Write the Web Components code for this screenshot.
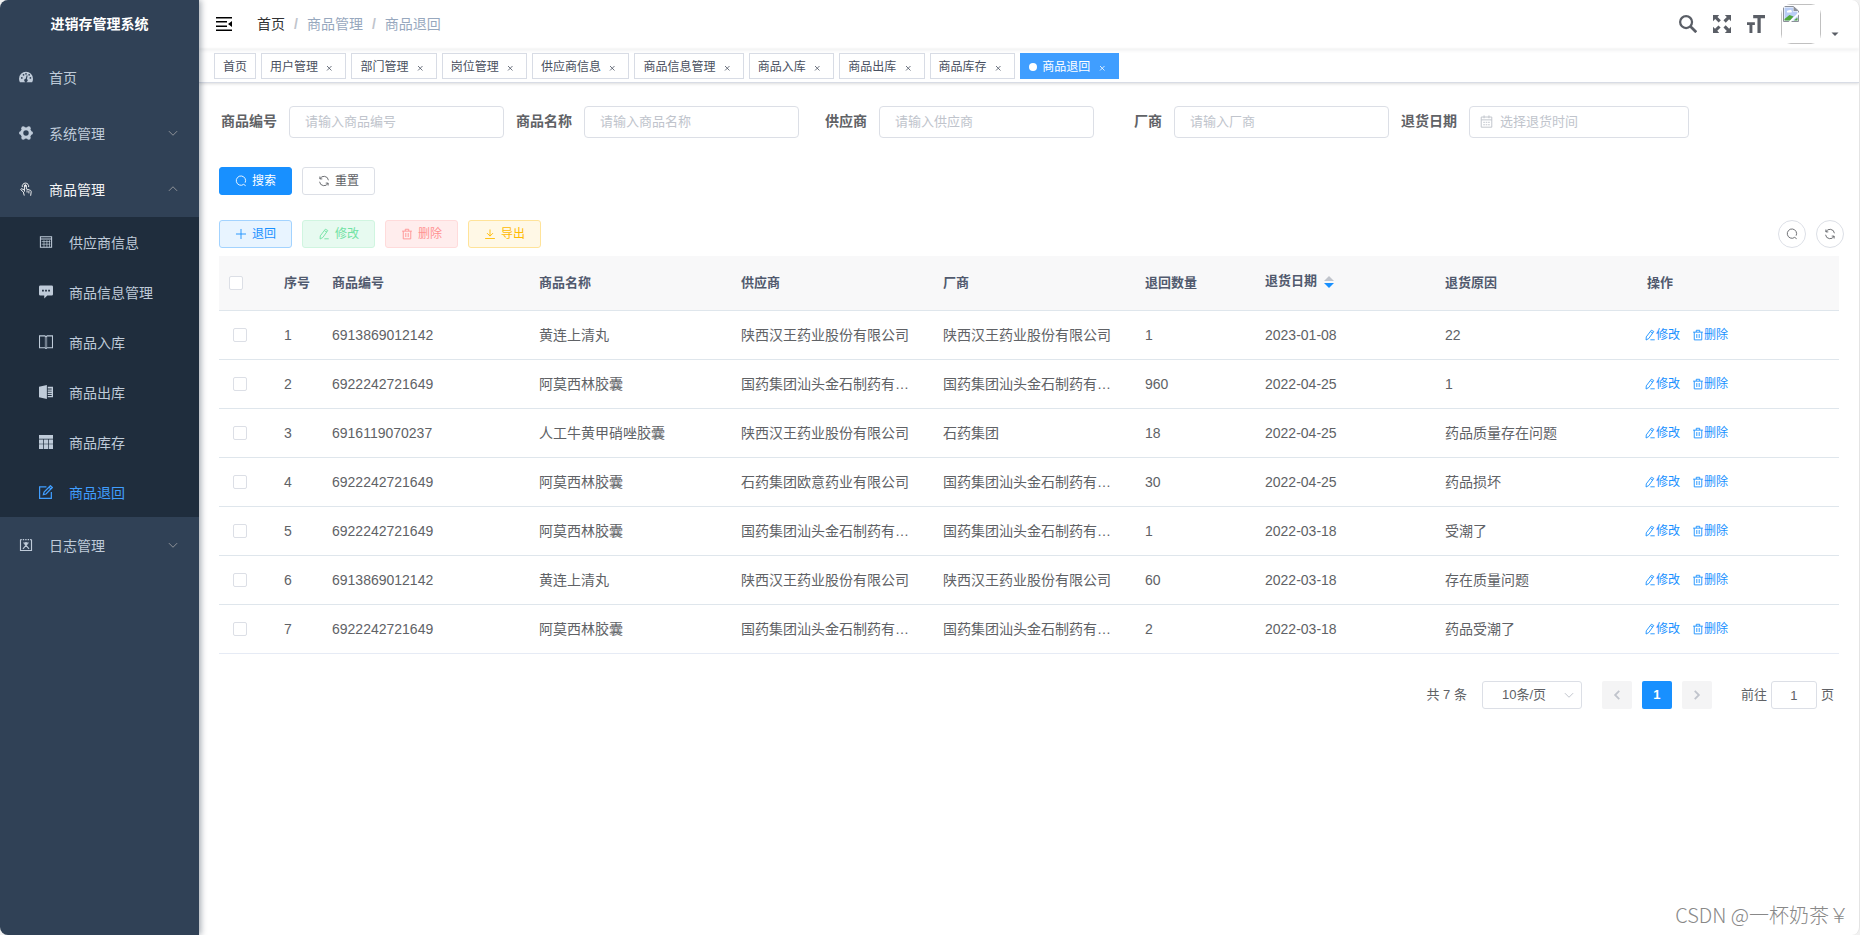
<!DOCTYPE html>
<html lang="zh-CN">
<head>
<meta charset="utf-8">
<meta name="viewport" content="width=device-width, initial-scale=1">
<title>进销存管理系统</title>
<style>
  body {
    margin: 0;
    background: #f1f1f1;
    font: 14px/20px "Liberation Sans", "Noto Sans CJK SC", sans-serif;
    color: #606266;
  }
</style>
</head>
<body>
<app-shell></app-shell>

<script>
const ICONS = {
  dashboard: '<path fill="currentColor" fill-rule="evenodd" d="M8 2a8 8 0 0 0-8 8c0 1.500.4 2.800 1 4h14a8 8 0 0 0 1-4 8 8 0 0 0-8-8zM2.200 9a1 1 0 1 1 2 0 1 1 0 0 1-2 0zm2-3.500a1 1 0 1 1 2 0 1 1 0 0 1-2 0zM8 3.300a1 1 0 1 1 0 2 1 1 0 0 1 0-2zm1.800 2.900-.7 4.100a1.900 1.900 0 1 1-1.500-.4l1.200-4zm.8-.7a1 1 0 1 1 2 0 1 1 0 0 1-2 0zm1.400 3.500a1 1 0 1 1 2 0 1 1 0 0 1-2 0z"/>',
  gear: '<circle cx="8" cy="8" r="4.800" fill="none" stroke="currentColor" stroke-width="3.400"/><g fill="currentColor"><circle cx="14" cy="8" r="2"/><circle cx="2" cy="8" r="2"/><circle cx="11.200" cy="2.500" r="2.200"/><circle cx="4.800" cy="2.500" r="2.200"/><circle cx="11.200" cy="13.500" r="2.200"/><circle cx="4.800" cy="13.500" r="2.200"/></g>',
  touch: '<g fill="none" stroke="currentColor" stroke-width="1.100"><path d="M3.800 5.800a3.700 3.700 0 1 1 7.200 0"/><path d="M6.200 11V4.200c0-1.500 2.200-1.500 2.200 0V8l4.600 1.500c1 .4 1 1 .9 2l-.6 4.200M6 9 3 7.700c-1-.2-1.500 1-.6 1.500L5 11.500l1 4M9.200 9.500V12M11.300 10.300V13"/></g><circle cx="7.300" cy="4.200" r="1.200" fill="currentColor"/>',
  table: '<path fill="none" stroke="currentColor" stroke-width="1.200" d="M1.600 2.100h12.800v11.800H1.600zM1.600 4.500h12.800"/><path fill="none" stroke="currentColor" d="M3 7.500h10M3 10.500h10M5.700 6v8M9 6v8M12 6v8" opacity=".8"/>',
  message: '<path fill="currentColor" fill-rule="evenodd" d="M1.500.5h13A1.500 1.500 0 0 1 16 2v8.500a1.500 1.500 0 0 1-1.500 1.500H9.500L6 15.500V12H1.500A1.500 1.500 0 0 1 0 10.500V2A1.500 1.500 0 0 1 1.500.5zM3.500 5.500v2h2v-2zm3.500 0v2h2v-2zm3.500 0v2h2v-2z"/>',
  book: '<path fill="none" stroke="currentColor" stroke-width="1.200" d="M6.600 1H.6v13.500h6l1.400 1 1.400-1h6V1h-6L8 2z"/><path fill="currentColor" opacity=".5" d="M6.600 1.500 8 2.300l1.400-.8v13L8 15.300l-1.400-.8z"/>',
  excel: '<path fill="currentColor" d="M0 2 9 0v16l-9-2zM10 2h6v12h-6v-1.500h4.500v-1H10V10h4.500V9H10V7.500h4.500v-1H10V5h4.500V4H10z"/>',
  grid: '<path fill="currentColor" d="M0 0h16v4.300H0zM0 5h4.800v5H0zM5.600 5h4.800v5H5.600zM11.200 5H16v5h-4.800zM0 10.700h4.800V16H0zM5.600 10.700h4.800V16H5.600zM11.200 10.700H16V16h-4.800z"/>',
  compose: '<g fill="none" stroke="currentColor" stroke-width="1.400"><path d="M8.500 2.200H.7v13h13.400V8"/><path d="m5 11 .8-3L13 .8l2.200 2.100L8 10.300zM11.500 2.500l2 2"/></g>',
  log: '<g fill="none" stroke="currentColor" stroke-width="1.300"><path d="M1.700 2v12.300h12.600V2"/><path stroke-dasharray="1.600 1.200" d="M1.500 1.800h13"/><path d="M4.500 12.500 8 8.500l3.500 4M5 5.500l3 1 3-1"/></g><circle cx="8" cy="6.500" r="2" fill="currentColor"/>',
  down: '<path fill="none" stroke="currentColor" stroke-width="1.300" d="m2.500 5.500 5.500 5.500 5.500-5.500"/>',
  up: '<path fill="none" stroke="currentColor" stroke-width="1.300" d="M2.500 10.500 8 5l5.500 5.500"/>',
  left: '<path fill="none" stroke="currentColor" stroke-width="2.400" d="M11 2.500 5.500 8l5.500 5.500"/>',
  right: '<path fill="none" stroke="currentColor" stroke-width="2.400" d="M5 2.500 10.500 8 5 13.500"/>',
  fold: '<path fill="currentColor" d="M0 1h16v1.500H0zM0 5h11v1.500H0zM0 9.500h11V11H0zM0 13.500h16V15H0zM16 5v6l-4-3z"/>',
  magnifier: '<g fill="none" stroke="currentColor" stroke-width="2"><circle cx="6.300" cy="6.300" r="5.300"/><path stroke-width="2.400" d="m10 10 5.300 5.300"/></g>',
  expand: '<path fill="currentColor" d="M0 0h5.500L4 1.700l3 3L5 6.600l-3-3L0 5.500zM16 0v5.500L14.300 3.800l-3 3L9.300 4.700l3-3L10.500 0zM0 16v-5.500l1.800 1.800 3-3L6.800 11l-3 3 1.700 2zM16 16h-5.500l1.800-1.800-3-3 2-2 3 3 1.700-1.700z"/>',
  fontsize: '<path fill="currentColor" d="M5.500 0H16v2.800h-3.800V16H9.300V2.800H5.500zM0 6.500h7v2.300H4.800V16H2.200V8.800H0z"/>',
  search: '<path fill="none" stroke="currentColor" stroke-width="1.200" d="M11.300 12.700A6.200 6.200 0 1 1 13.500 10.200M11.300 12.300l2.900 2"/>',
  refresh: '<path fill="none" stroke="currentColor" stroke-width="1.200" d="M2.500 2v3.200h3.200M2.500 5.200A6 6 0 0 1 13.900 7M13.500 14v-3.200h-3.200M13.500 10.800A6 6 0 0 1 2.100 9"/>',
  plus: '<path fill="none" stroke="currentColor" stroke-width="1.200" d="M8 1.300v13.400M1.300 8h13.400"/>',
  edit: '<path fill="none" stroke="currentColor" stroke-width="1.200" d="M9.800 1.600 13 3.300 6.500 12.600l-3.700 2.100.2-4.200zM8.700 3.700l3.200 1.800M8.500 14.400h5.800"/>',
  trash: '<path fill="none" stroke="currentColor" stroke-width="1.200" d="M1.500 4.200h13M5.700 4V1.700h4.600V4M3 4.200v10.300h10V4.200M6.400 6.700v5.300M9.600 6.700v5.300"/>',
  download: '<path fill="none" stroke="currentColor" stroke-width="1.200" d="M8 2v8.800M4 6.800l4 4 4-4M1.500 14h13"/>',
  calendar: '<path fill="none" stroke="currentColor" stroke-width="1.200" d="M1.500 2.500h13v12.500h-13zM1.500 6h13M5 .5v3.500M11 .5v3.500M4 9h2M7 9h2M10 9h2M4 12h2M7 12h2M10 12h2"/>',
  close: '<path fill="none" stroke="currentColor" stroke-width=".8" d="m6 6 4.500 4.500M10.500 6 6 10.500"/>',
  caret: '<path fill="currentColor" d="M1 5h14l-7 7z"/>',
  broken: '<path fill="#fff" stroke="#8b9099" d="M.5.500h10l5 4.500v10.500H.5z"/><path fill="#b9cdf5" d="M1.500 1.500h8.500v4h4.500v9h-13z"/><path fill="#fff" d="M4 6.500a1.500 1.500 0 0 1 2-2 1.500 1.500 0 0 1 2.500 2z"/><path fill="#4fa83a" d="M1.500 14.500v-1.500L6.500 9l4 1.500-3.500 4z"/><path fill="#4fa83a" d="m11 14.500 3.500-3v3z"/><path fill="#fff" d="M16 6v2.500L8 16H5.500z"/><path fill="#8b9099" d="M10.500.5 15.500 5h-5z"/>'
};

class Base extends HTMLElement {
  constructor() { super(); this.attachShadow({ mode: 'open' }); }
  connectedCallback() { this.shadowRoot.innerHTML = this.render(); }
}

customElements.define('ui-icon', class extends Base {
  render() {
    return `<style>:host{display:inline-block;width:12px;height:12px;flex:none}svg{display:block;width:100%;height:100%}</style>
    <svg viewBox="0 0 16 16" aria-hidden="true">${ICONS[this.getAttribute('name')]}</svg>`;
  }
});

customElements.define('ui-button', class extends Base {
  render() {
    const dis = this.hasAttribute('disabled') ? 'disabled' : '';
    return `<style>
      :host{display:inline-block;--bg:#fff;--fg:#606266;--bd:#dcdfe6}
      :host([kind=primary]){--bg:#1890ff;--fg:#fff;--bd:#1890ff}
      :host([kind=add]){--bg:#e8f4ff;--fg:#1890ff;--bd:#a3d3ff}
      :host([kind=edit]){--bg:#e7faf0;--fg:#71e2a3;--bd:#d0f5e0}
      :host([kind=remove]){--bg:#ffeded;--fg:#ff9292;--bd:#ffdbdb}
      :host([kind=export]){--bg:#fff8e6;--fg:#ffba00;--bd:#ffe399}
      button{display:flex;align-items:center;gap:5px;height:28px;box-sizing:border-box;padding:0 15px;
        border:1px solid var(--bd);border-radius:3px;background:var(--bg);color:var(--fg);
        font:inherit;font-size:12px;line-height:16px;white-space:nowrap;cursor:pointer}
      :host([round]) button{width:28px;padding:0;justify-content:center;border-radius:50%}
    </style>
    <button type="button" ${dis} aria-label="${this.getAttribute('label') || this.textContent}"><ui-icon name="${this.getAttribute('icon')}"></ui-icon><slot></slot></button>`;
  }
});

customElements.define('side-item', class extends Base {
  render() {
    const arrow = this.getAttribute('arrow');
    return `<style>
      :host{display:block;color:#bfcbd9}
      :host([open]){color:#f4f4f5}
      :host([active]){color:#409eff}
      a{display:flex;align-items:center;gap:16px;height:56px;padding:0 20px 0 19px;color:inherit;text-decoration:none}
      :host([sub]) a{height:50px;padding-left:39px}
      ui-icon{width:14px;height:14px}
      .t{flex:1;padding-top:2px}
      .arrow{width:12px;height:12px;color:#909399}
    </style>
    <a href="#"><ui-icon name="${this.getAttribute('icon')}"></ui-icon><span class="t"><slot></slot></span>${arrow ? `<ui-icon class="arrow" name="${arrow}"></ui-icon>` : ''}</a>`;
  }
});

customElements.define('side-bar', class extends Base {
  render() {
    return `<style>
      :host{display:block;background:#304156;box-shadow:2px 0 6px rgba(0,21,41,.35);position:relative;z-index:2}
      h1{margin:0;height:49px;line-height:49px;text-align:center;font-size:14px;font-weight:700;color:#fff}
      .sub{background:#1f2d3d}
    </style>
    <h1>进销存管理系统</h1>
    <nav>
      <side-item icon="dashboard">首页</side-item>
      <side-item icon="gear" arrow="down">系统管理</side-item>
      <side-item icon="touch" arrow="up" open>商品管理</side-item>
      <div class="sub">
        <side-item sub icon="table">供应商信息</side-item>
        <side-item sub icon="message">商品信息管理</side-item>
        <side-item sub icon="book">商品入库</side-item>
        <side-item sub icon="excel">商品出库</side-item>
        <side-item sub icon="grid">商品库存</side-item>
        <side-item sub icon="compose" active>商品退回</side-item>
      </div>
      <side-item icon="log" arrow="down">日志管理</side-item>
    </nav>`;
  }
});

customElements.define('nav-bar', class extends Base {
  render() {
    return `<style>
      :host{display:flex;align-items:center;box-sizing:border-box;height:49px;padding:0 20px 2px 17px;box-shadow:0 1px 4px rgba(0,21,41,.08)}
      button{display:block;padding:0;border:0;background:none;color:#5a5e66;line-height:0}
      button ui-icon{width:18px;height:18px}
      .fold{color:#000}.fold ui-icon{width:16px;height:16px}
      .crumb{display:flex;gap:9px;margin-left:25px;color:#97a8be;flex:1}
      .crumb a{color:#303133;text-decoration:none}
      .crumb i{font-style:normal;font-weight:700;color:#c0c4cc}
      .tools{display:flex;align-items:center;gap:16px}
      .user{display:flex;align-items:flex-end;gap:10px}
      .user .caret{width:8px;height:8px;margin-bottom:6px}
      .avatar{width:40px;height:40px;border-radius:10px;overflow:hidden}
      .avatar div{box-sizing:border-box;height:100%;border:1px solid #c0c0c0;padding:1px}
      .avatar ui-icon{width:16px;height:16px;display:block}
    </style>
    <button class="fold" type="button" aria-label="折叠菜单"><ui-icon name="fold"></ui-icon></button>
    <div class="crumb"><a href="#">首页</a><i>/</i><span>商品管理</span><i>/</i><span>商品退回</span></div>
    <div class="tools">
      <button type="button" aria-label="搜索"><ui-icon name="magnifier"></ui-icon></button>
      <button type="button" aria-label="全屏"><ui-icon name="expand"></ui-icon></button>
      <button type="button" aria-label="字号"><ui-icon name="fontsize"></ui-icon></button>
      <button class="user" type="button" aria-label="用户"><span class="avatar"><div><ui-icon name="broken"></ui-icon></div></span><ui-icon class="caret" name="caret"></ui-icon></button>
    </div>`;
  }
});

customElements.define('tag-item', class extends Base {
  render() {
    const active = this.hasAttribute('active');
    return `<style>
      :host{display:block;box-sizing:border-box;height:26px;padding:0 8px;border:1px solid #d8dce5;background:#fff;color:#495060;font-size:12px;line-height:26px;white-space:nowrap}
      :host([active]){background:#409eff;border-color:#409eff;color:#fff}
      a{color:inherit;text-decoration:none}
      .dot{display:inline-block;width:8px;height:8px;border-radius:50%;background:#fff;margin-right:2px}
      button{display:inline-block;width:16px;height:16px;padding:0;border:0;background:none;color:inherit;line-height:0;vertical-align:middle}
      ui-icon{width:16px;height:16px}
    </style>${active ? '<span class="dot"></span> ' : ''}<a href="#"><slot></slot></a>${this.hasAttribute('fixed') ? '' : ' <button type="button" aria-label="关闭"><ui-icon name="close"></ui-icon></button>'}`;
  }
});

customElements.define('tags-view', class extends Base {
  render() {
    const names = ['用户管理', '部门管理', '岗位管理', '供应商信息', '商品信息管理', '商品入库', '商品出库', '商品库存'];
    return `<style>
      :host{display:flex;gap:5px;box-sizing:border-box;height:34px;padding:4px 15px 0;border-bottom:1px solid #d8dce5;
        box-shadow:0 1px 3px rgba(0,0,0,.12),0 0 3px rgba(0,0,0,.04)}
    </style>
    <tag-item fixed>首页</tag-item>${names.map(n => `<tag-item>${n}</tag-item>`).join('')}<tag-item active>商品退回</tag-item>`;
  }
});

customElements.define('form-field', class extends Base {
  render() {
    const date = this.hasAttribute('date');
    return `<style>
      :host{display:flex;align-items:center}
      label{width:58px;padding:0 12px 2px 0;text-align:right;font-weight:700;line-height:30px}
      .box{position:relative;width:215px}
      :host([date]) .box{width:220px}
      input{display:block;box-sizing:border-box;width:100%;height:32px;padding:0 15px 2px;border:1px solid #dcdfe6;border-radius:4px;
        background:#fff;color:#606266;font:inherit;font-size:13px;outline:0}
      input::placeholder{color:#c0c4cc;opacity:1}
      :host([date]) input{padding-left:30px}
      ui-icon{position:absolute;left:11px;top:9px;width:13px;height:13px;color:#c0c4cc}
    </style>
    <label for="f">${this.getAttribute('label')}</label>
    <span class="box">${date ? '<ui-icon name="calendar"></ui-icon>' : ''}<input id="f" type="text" placeholder="${this.getAttribute('hint')}"></span>`;
  }
});

customElements.define('search-form', class extends Base {
  render() {
    return `<style>
      :host{display:block}
      .fields{display:flex;flex-wrap:wrap;gap:18px 10px}
      .actions{display:flex;gap:10px;margin-top:29px}
    </style>
    <div class="fields">
      <form-field label="商品编号" hint="请输入商品编号"></form-field>
      <form-field label="商品名称" hint="请输入商品名称"></form-field>
      <form-field label="供应商" hint="请输入供应商"></form-field>
      <form-field label="厂商" hint="请输入厂商"></form-field>
      <form-field date label="退货日期" hint="选择退货时间"></form-field>
    </div>
    <div class="actions">
      <ui-button kind="primary" icon="search">搜索</ui-button>
      <ui-button icon="refresh">重置</ui-button>
    </div>`;
  }
});

customElements.define('tool-bar', class extends Base {
  render() {
    return `<style>
      :host{display:flex;gap:10px}
      .space{flex:1}
    </style>
    <ui-button kind="add" icon="plus">退回</ui-button>
    <ui-button kind="edit" icon="edit" disabled>修改</ui-button>
    <ui-button kind="remove" icon="trash" disabled>删除</ui-button>
    <ui-button kind="export" icon="download">导出</ui-button>
    <span class="space"></span>
    <ui-button round icon="search" label="显示搜索"></ui-button>
    <ui-button round icon="refresh" label="刷新"></ui-button>`;
  }
});

const HW = '陕西汉王药业股份有限公司', JS = '国药集团汕头金石制药有限公司';
const ROWS = [
  ['6913869012142', '黄连上清丸', HW, HW, 1, '2023-01-08', '22'],
  ['6922242721649', '阿莫西林胶囊', JS, JS, 960, '2022-04-25', '1'],
  ['6916119070237', '人工牛黄甲硝唑胶囊', HW, '石药集团', 18, '2022-04-25', '药品质量存在问题'],
  ['6922242721649', '阿莫西林胶囊', '石药集团欧意药业有限公司', JS, 30, '2022-04-25', '药品损坏'],
  ['6922242721649', '阿莫西林胶囊', JS, JS, 1, '2022-03-18', '受潮了'],
  ['6913869012142', '黄连上清丸', HW, HW, 60, '2022-03-18', '存在质量问题'],
  ['6922242721649', '阿莫西林胶囊', JS, JS, 2, '2022-03-18', '药品受潮了']
];

customElements.define('data-table', class extends Base {
  render() {
    const row = (r, i) => `<tr><td class="pick"><input type="checkbox" aria-label="选择第${i + 1}行"></td><td>${i + 1}</td>${r.map(c => `<td>${c}</td>`).join('')}
      <td class="ops"><div><a href="#"><ui-icon name="edit"></ui-icon>修改</a><a href="#"><ui-icon name="trash"></ui-icon>删除</a></div></td></tr>`;
    return `<style>
      :host{display:block}
      table{width:100%;table-layout:fixed;border-collapse:separate;border-spacing:0}
      th,td{box-sizing:border-box;padding:0 12px 0 10px;text-align:left;border-bottom:1px solid #dfe6ec;white-space:nowrap;overflow:hidden;text-overflow:ellipsis}
      th{height:55px;background:#f8f8f9;color:#515a6e;font-size:13px;font-weight:700}
      td{height:49px}
      tr:last-child td{border-bottom-color:#e6ebf5}
      .pick{padding:0 0 0 14px}
      th.pick{padding-left:10px}
      th.seq{padding-right:0}
      input{appearance:none;display:block;box-sizing:border-box;width:14px;height:14px;margin:0;border:1px solid #dcdfe6;border-radius:2px;background:#fff}
      .sort{display:flex;align-items:center;gap:7px;padding-bottom:4px}
      .sort svg{width:10px;height:12px;margin-top:2px}
      .ops{padding:0 0 0 7px}
      .ops div{display:flex;gap:12px}
      a{display:flex;align-items:center;color:#1890ff;font-size:12px;text-decoration:none}
    </style>
    <table>
      <colgroup><col style="width:55px"><col style="width:48px"><col style="width:207px"><col><col><col><col style="width:120px"><col style="width:180px"><col><col></colgroup>
      <thead><tr><th class="pick"><input type="checkbox" aria-label="全选"></th><th class="seq">序号</th><th>商品编号</th><th>商品名称</th><th>供应商</th><th>厂商</th><th>退回数量</th>
        <th><div class="sort">退货日期<svg viewBox="0 0 10 12" aria-hidden="true"><path fill="#c0c4cc" d="M0 5h10L5 0z"/><path fill="#1890ff" d="M0 7h10l-5 5z"/></svg></div></th><th>退货原因</th><th>操作</th></tr></thead>
      <tbody>${ROWS.map(row).join('')}</tbody>
    </table>`;
  }
});

customElements.define('page-nav', class extends Base {
  render() {
    return `<style>
      :host{display:flex;justify-content:flex-end;align-items:center;font-size:13px;padding-right:5px}
      .size{position:relative;margin:0 20px 0 15px}
      select{appearance:none;display:block;box-sizing:border-box;width:100px;height:28px;padding:0 16px 0 0;border:1px solid #dcdfe6;border-radius:3px;background:#fff;color:#606266;font:inherit;text-align:center;text-align-last:center}
      .size ui-icon{position:absolute;right:7px;top:8px;color:#c0c4cc;pointer-events:none}
      .pages{display:flex;gap:10px;margin-right:29px}
      button{display:grid;place-items:center;width:30px;height:28px;padding:0;border:0;border-radius:2px;background:#f4f4f5;color:#c0c4cc;font:inherit;font-weight:700}
      button.on{background:#1890ff;color:#fff}
      label{display:flex;align-items:center;gap:4px}
      input{box-sizing:border-box;width:46px;height:28px;border:1px solid #dcdfe6;border-radius:3px;padding:0;text-align:center;color:#606266;font:inherit}
    </style>
    <span>共 7 条</span>
    <span class="size"><select aria-label="每页条数"><option>10条/页</option></select><ui-icon name="down"></ui-icon></span>
    <span class="pages"><button type="button" disabled aria-label="上一页"><ui-icon name="left"></ui-icon></button><button class="on" type="button">1</button><button type="button" disabled aria-label="下一页"><ui-icon name="right"></ui-icon></button></span>
    <label>前往<input type="text" value="1" aria-label="页码">页</label>`;
  }
});

customElements.define('app-shell', class extends Base {
  render() {
    return `<style>
      :host{display:grid;grid-template-columns:199px minmax(0,1fr);min-height:100vh;box-sizing:border-box;position:relative;
        border-right:1px solid #e4e4e4;border-radius:8px;overflow:hidden;background:#fff}
      main{padding:23px 20px 40px}
      tool-bar{margin:25px -5px 8px 0}
      page-nav{margin-top:27px}
      .mark{position:absolute;right:10px;bottom:8px;font:300 20px/24px "Noto Sans CJK SC",sans-serif;color:#888}
    </style>
    <side-bar></side-bar>
    <div>
      <nav-bar></nav-bar>
      <tags-view></tags-view>
      <main>
        <search-form></search-form>
        <tool-bar></tool-bar>
        <data-table></data-table>
        <page-nav></page-nav>
      </main>
    </div>
    <div class="mark">CSDN @一杯奶茶￥</div>`;
  }
});
</script>
</body>
</html>
